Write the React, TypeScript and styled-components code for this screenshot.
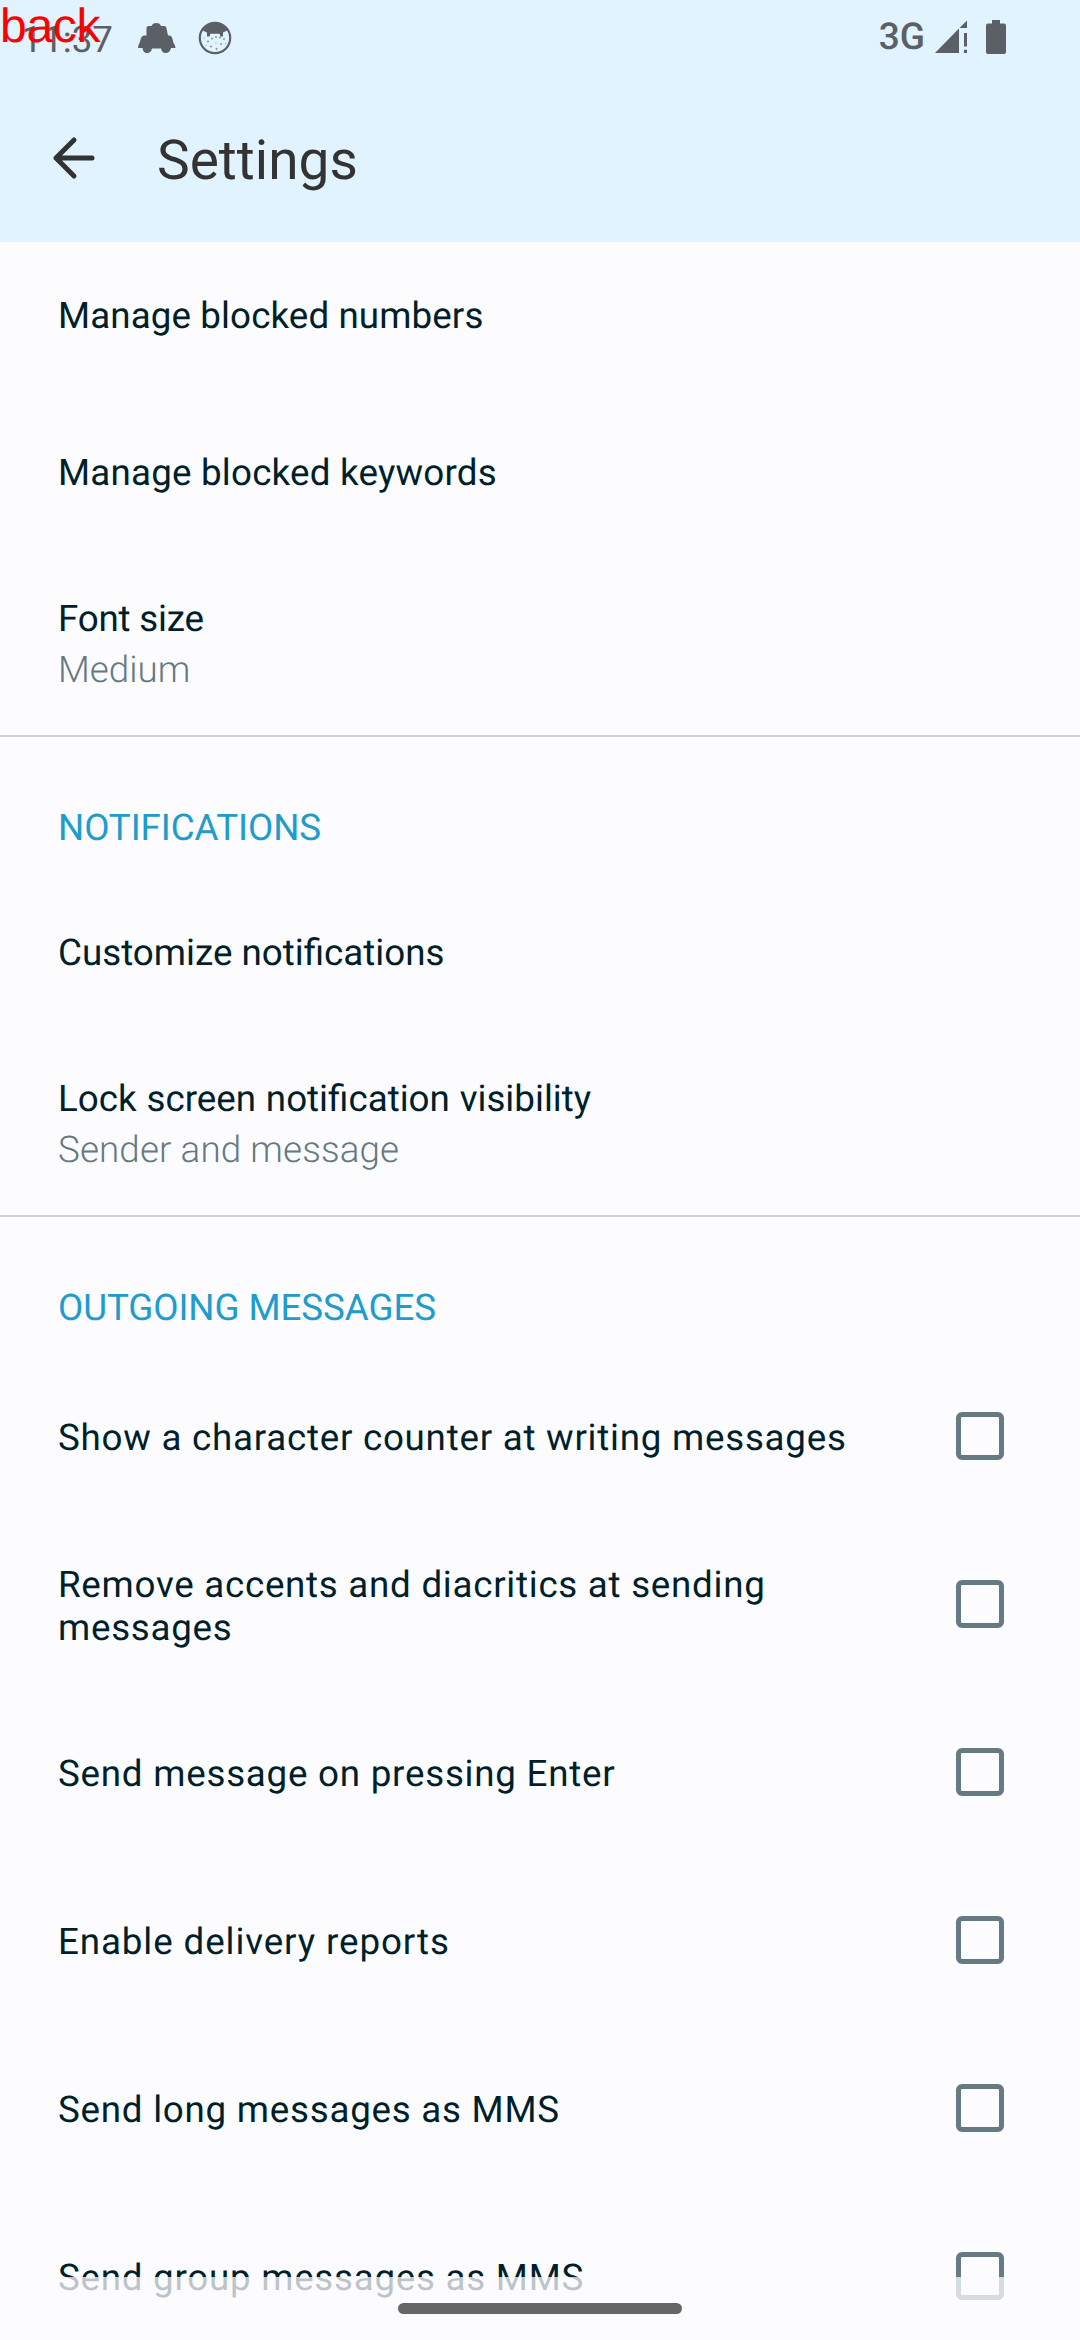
import React from "react";
import styled, { createGlobalStyle } from "styled-components";

const GlobalStyle = createGlobalStyle`
  * { box-sizing: border-box; }
  html, body { margin: 0; padding: 0; background: #fcfcff; }
  body {
    font-family: Roboto, "Noto Sans", sans-serif;
    text-rendering: geometricPrecision;
  }
`;

const Screen = styled.div`
  position: relative;
  display: flex;
  flex-direction: column;
  width: 1080px;
  height: 2340px;
  overflow: hidden;
  background: #fcfcff;
`;

const Header = styled.header`
  flex: none;
  height: 242px;
  background: #e0f3ff;
`;

const StatusBar = styled.div`
  display: flex;
  align-items: center;
  height: 74px;
  padding: 0 74px 0 21.5px;
  color: #5a6066;
`;

const Clock = styled.span`
  width: 116.5px;
  padding-top: 4px;
  font-size: 36.75px;
  line-height: 43px;
`;

const StatusIcons = styled.div`
  display: flex;
  align-items: center;
  gap: 22px;
  flex: 1;
  padding-top: 2px;
`;

const Network = styled.span`
  font-size: 37px;
  font-weight: 500;
  line-height: 43px;
  margin-right: 10px;
`;

const Signal = styled.svg`
  margin-right: 19px;
`;

const GestureLabel = styled.span`
  position: absolute;
  left: 0;
  top: 0;
  font-family: "Liberation Sans", Arial, sans-serif;
  font-size: 48px;
  line-height: 54px;
  letter-spacing: -0.3px;
  color: #ff0000;
`;

const Toolbar = styled.div`
  display: flex;
  align-items: center;
  height: 166px;
  padding-left: 42px;
`;

const BackButton = styled.button`
  display: flex;
  padding: 0;
  border: 0;
  background: none;
  width: 115px;
`;

const Title = styled.h1`
  margin: 0;
  padding-top: 8px;
  font-size: 55px;
  font-weight: 400;
  line-height: 64px;
  color: #333333;
`;

const Section = styled.section`
  flex: none;
  & + & { border-top: 2px solid #d0d1d4; }
`;

const SectionTitle = styled.h2<{ $below: number }>`
  display: flex;
  align-items: flex-end;
  height: 112px;
  margin: 0 0 ${(p) => p.$below}px;
  padding-left: 58px;
  font-size: 36.75px;
  font-weight: 400;
  line-height: 43px;
  letter-spacing: -0.08px;
  color: #219bcc;
`;

const Row = styled.div<{ $height: number; $above?: number; $below?: number }>`
  display: flex;
  align-items: center;
  justify-content: space-between;
  height: ${(p) => p.$height}px;
  padding: ${(p) => p.$above ?? 0}px 76px ${(p) => p.$below ?? 0}px 58px;
`;

const Texts = styled.div`
  display: flex;
  flex-direction: column;
  gap: 8px;
`;

const Label = styled.span<{ $tracking?: number; $wordGap?: number }>`
  font-size: 36.75px;
  line-height: 43px;
  letter-spacing: ${(p) => p.$tracking ?? 0}px;
  word-spacing: ${(p) => p.$wordGap ?? 0}px;
  color: #001f2a;
`;

const CheckLabel = styled(Label)`
  max-width: 820px;
  padding-top: 3.5px;
`;

const Value = styled.span<{ $tracking?: number }>`
  font-size: 36.75px;
  font-weight: 300;
  line-height: 43px;
  letter-spacing: ${(p) => p.$tracking ?? 0}px;
  color: #667981;
`;

const Checkbox = styled.span`
  flex: none;
  width: 48px;
  height: 48px;
  border: 5.5px solid #667a84;
  border-radius: 6px;
`;

const NavBar = styled.nav`
  position: absolute;
  left: 0;
  right: 0;
  bottom: 0;
  height: 63px;
  display: flex;
  justify-content: center;
  padding-top: 26px;
  background: rgba(252, 252, 255, 0.75);
`;

const Pill = styled.span`
  width: 284px;
  height: 11px;
  border-radius: 6px;
  background: #666666;
`;

const options = [
  { text: "Show a character counter at writing messages", tracking: 0.74 },
  { text: "Remove accents and diacritics at sending messages", tracking: 0.72 },
  { text: "Send message on pressing Enter", tracking: 0.75 },
  { text: "Enable delivery reports", tracking: 0.89 },
  { text: "Send long messages as MMS", tracking: 0.74 },
  { text: "Send group messages as MMS", tracking: 0.73 },
];

const freckles = [
  [6, 17], [10, 20.5], [14, 17.5], [18, 22], [22, 16.5], [26, 18],
  [8, 24.5], [13, 25.5], [23, 23], [27.5, 22.5], [18.5, 28], [18, 16],
];

export default function App() {
  return (
    <Screen>
      <GlobalStyle />
      <Header>
        <StatusBar>
          <Clock>11:37</Clock>
          <StatusIcons>
            <svg width="38" height="30" viewBox="0 0 38 30" fill="#5a6066">
              <path d="M8.5 5 Q8.500 3 10.500 3 H13.500 Q14.500 0 18.500 0 Q22 0 23 3 H26 Q28.500 3 28.500 5.500 L30 12.500 H32 Q34 13 34.500 16 L35.500 20 Q37.500 22 37.500 25 H33 Q32 30 27.500 30 Q24 30 23 25.500 H14 Q13 30 9 30 Q5 30 4.500 25 H0 Q0 22 1.500 20 L3 15 Q4 12.500 6 12.500 H8.500 Z" />
            </svg>
            <svg width="34" height="34" viewBox="0 0 34 34" fill="#5a6066">
              <circle cx="17" cy="17" r="15.2" fill="none" stroke="#5a6066" strokeWidth="2.2" />
              <path d="M4 8 Q9 1.500 17 1.500 T30 8 Q28.500 11 25 11.500 V15.500 H22.500 L21.500 12.800 H12.500 L11.500 15.500 H9 V11.500 Q5.500 11 4 8 Z" />
              {freckles.map(([x, y], i) => (
                <circle key={i} cx={x} cy={y} r={i % 3 === 0 ? 0.6 : 0.9} opacity="0.7" />
              ))}
            </svg>
          </StatusIcons>
          <Network>3G</Network>
          <Signal width="32" height="34" viewBox="0 0 32 34" fill="#5a6066">
            <path d="M0 33 L24 8.500 V33 Z M24.500 8 L32 0.500 V8 Z M29 13 H32 V26.500 H29 Z M29 29.700 H32 V33 H29 Z" />
          </Signal>
          <svg width="20" height="34" viewBox="0 0 20 34" fill="#5a6066">
            <path d="M6 0 H14 V3.500 H18 Q20 3.500 20 5.500 V32 Q20 34 18 34 H2 Q0 34 0 32 V5.500 Q0 3.500 2 3.500 H6 Z" />
          </svg>
        </StatusBar>
        <Toolbar>
          <BackButton aria-label="Back">
            <svg width="63" height="63" viewBox="0 0 63 63" fill="none" stroke="#333333" strokeWidth="5" strokeLinecap="round" strokeLinejoin="round">
              <path d="M32 14 L14 32 L32 50 M14 32 H50" />
            </svg>
          </BackButton>
          <Title>Settings</Title>
        </Toolbar>
      </Header>
      <Section>
        <Row $height={152} $below={5}>
          <Label $tracking={0.1}>Manage blocked numbers</Label>
        </Row>
        <Row $height={157}>
          <Label $tracking={0.2}>Manage blocked keywords</Label>
        </Row>
        <Row $height={184} $above={2}>
          <Texts>
            <Label $tracking={-0.2}>Font size</Label>
            <Value>Medium</Value>
          </Texts>
        </Row>
      </Section>
      <Section>
        <SectionTitle $below={25}>NOTIFICATIONS</SectionTitle>
        <Row $height={157}>
          <Label>Customize notifications</Label>
        </Row>
        <Row $height={184} $above={2}>
          <Texts>
            <Label $wordGap={0.7}>Lock screen notification visibility</Label>
            <Value $tracking={0.12}>Sender and message</Value>
          </Texts>
        </Row>
      </Section>
      <Section>
        <SectionTitle $below={23}>OUTGOING MESSAGES</SectionTitle>
        {options.map(({ text, tracking }) => (
          <Row key={text} $height={168}>
            <CheckLabel $tracking={tracking}>{text}</CheckLabel>
            <Checkbox />
          </Row>
        ))}
      </Section>
      <NavBar>
        <Pill />
      </NavBar>
      <GestureLabel>back</GestureLabel>
    </Screen>
  );
}
